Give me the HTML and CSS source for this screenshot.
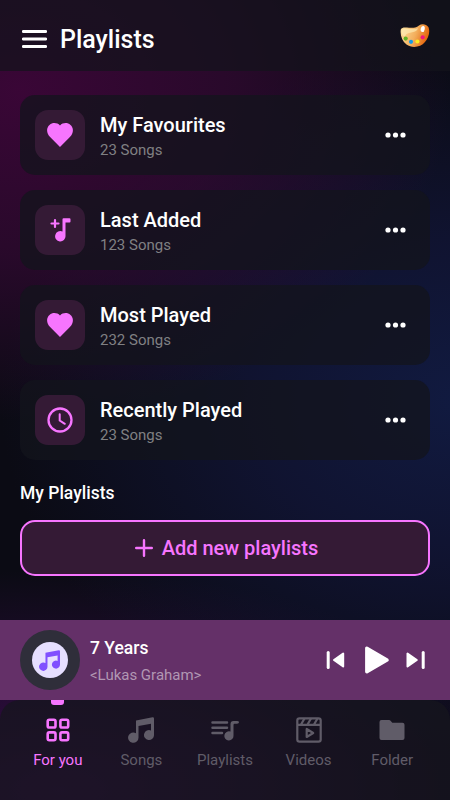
FILE: index.html
```
<!doctype html>
<html lang="en">
<head>
	<meta charset="utf-8">
	<title>Playlists</title>
	<link rel="stylesheet" href="styles.css">
</head>
<body>
<svg class="defs">
	<symbol id="heart" viewBox="0 0 26 24">
		<path d="M13 24 3.1 14.1C-.8 10.200-.8 4.600 2.500 1.900C5.600-.7 10.200-.4 13 2.500C15.800-.4 20.400-.7 23.500 1.900C26.800 4.600 26.800 10.200 22.900 14.100Z" fill="currentColor" />
	</symbol>
	<symbol id="note" viewBox="0 0 26 26">
		<path fill-rule="evenodd" d="M8 3.500 24.500.2Q26 0 26 1.500V18A5 5 0 1 1 23 13.500V6.800L10.500 9V20.500A5.200 5.200 0 1 1 8 16.200Z" fill="currentColor" />
	</symbol>
	<symbol id="dots" viewBox="0 0 21 6">
		<g fill="currentColor"><circle cx="3" cy="3" r="2.600" /><circle cx="10.500" cy="3" r="2.600" /><circle cx="18" cy="3" r="2.600" /></g>
	</symbol>
</svg>
<div class="app">
	<header class="header">
		<svg class="menu" viewBox="0 0 25 18"><path d="M1.300 1.500H23.700M1.300 9H23.700M1.300 16.500H23.700" /></svg>
		<h1>Playlists</h1>
		<svg class="palette" viewBox="0 0 30 24">
			<defs>
				<linearGradient id="wood" x1="0" y1="0" x2="1" y2=".3">
					<stop offset="0" stop-color="#fce3a2" />
					<stop offset=".6" stop-color="#f3ae5c" />
					<stop offset="1" stop-color="#e5680f" />
				</linearGradient>
			</defs>
			<path d="M.8 5.500C2 2.600 6 3.600 9 3.700C14.500 4 17 3.400 19 1.500C22-.8 26.500.2 28.500 3.200C30.400 8 28.300 14 25 18C20.500 23.500 12 24.500 6.500 20.500C2 17 0 11 .8 5.500Z" fill="url(#wood)" />
			<path d="M1.500 6.500C3 3.300 7 4.800 10.500 4.900C14.500 5 16.500 4.800 18 4C17 10 8 6.500 5 12C3 13 1.300 9.500 1.500 6.500Z" fill="#fff2bd" opacity=".6" />
			<ellipse cx="22.700" cy="5" rx="2" ry="3.100" transform="rotate(12 22.700 5)" fill="#fff" />
			<circle cx="5.700" cy="14.600" r="2.100" fill="#62b425" />
			<circle cx="11" cy="17.800" r="2.100" fill="#159be8" />
			<circle cx="17.400" cy="17.500" r="2.100" fill="#fced20" />
			<circle cx="22.700" cy="13.300" r="2.100" fill="#f0187c" />
		</svg>
	</header>

	<main class="content">
		<div class="card">
			<div class="tile"><svg class="icon-heart"><use href="#heart" /></svg></div>
			<div class="info">
				<h2>My Favourites</h2>
				<p>23 Songs</p>
			</div>
			<svg class="more"><use href="#dots" /></svg>
		</div>
		<div class="card">
			<div class="tile">
				<svg class="icon-added" viewBox="0 0 21 24">
					<path d="M5 2V9M1.500 5.500H8.500" fill="none" stroke="currentColor" stroke-width="2.200" stroke-linecap="round" />
					<path d="M12.500 1.200Q12.500.3 13.500.3H19.500Q20.500.3 20.500 1.300V3.500Q20.500 4.500 19.500 4.500H15.500V18A5.200 5.200 0 1 1 12.500 13.600Z" fill="currentColor" />
				</svg>
			</div>
			<div class="info">
				<h2>Last Added</h2>
				<p>123 Songs</p>
			</div>
			<svg class="more"><use href="#dots" /></svg>
		</div>
		<div class="card">
			<div class="tile"><svg class="icon-heart"><use href="#heart" /></svg></div>
			<div class="info">
				<h2>Most Played</h2>
				<p>232 Songs</p>
			</div>
			<svg class="more"><use href="#dots" /></svg>
		</div>
		<div class="card">
			<div class="tile">
				<svg class="icon-clock" viewBox="0 0 26 26">
					<g fill="none" stroke="currentColor" stroke-width="2.300" stroke-linecap="round">
						<circle cx="13" cy="13" r="11.500" />
						<path d="M12.700 7.300V13.500L17.800 16.800" stroke-width="2" />
					</g>
				</svg>
			</div>
			<div class="info">
				<h2>Recently Played</h2>
				<p>23 Songs</p>
			</div>
			<svg class="more"><use href="#dots" /></svg>
		</div>

		<h3>My Playlists</h3>
		<button class="add">
			<svg viewBox="0 0 18 18"><path d="M9 1.200V16.800M1.200 9H16.800" /></svg>
			<span>Add new playlists</span>
		</button>
	</main>

	<section class="player">
		<div class="cover"><div class="disc"><svg><use href="#note" /></svg></div></div>
		<div class="track">
			<h4>7 Years</h4>
			<p>&lt;Lukas Graham&gt;</p>
		</div>
		<div class="controls">
			<svg class="skip" viewBox="0 0 19 18">
				<path d="M2.200 1.500V16.500" stroke="#fff" stroke-width="3" stroke-linecap="round" />
				<path d="M17.200 2.500V15.500L8 9Z" fill="#fff" stroke="#fff" stroke-width="2" stroke-linejoin="round" />
			</svg>
			<svg class="play" viewBox="0 0 24 28">
				<path d="M1.800 2.200V25.800L22 14Z" fill="#fff" stroke="#fff" stroke-width="3.400" stroke-linejoin="round" />
			</svg>
			<svg class="skip" viewBox="0 0 19 18">
				<path d="M17.200 1.500V16.500" stroke="#fff" stroke-width="3" stroke-linecap="round" />
				<path d="M1.500 2.500V15.500L10.800 9Z" fill="#fff" stroke="#fff" stroke-width="2" stroke-linejoin="round" />
			</svg>
		</div>
	</section>

	<nav class="tabs">
		<a class="tab active">
			<svg viewBox="0 0 26 26">
				<g fill="none" stroke="currentColor" stroke-width="2.600">
					<rect x="2.700" y="2.700" width="7.800" height="7.800" rx="1.600" />
					<rect x="15.400" y="2.700" width="7.800" height="7.800" rx="1.600" />
					<rect x="2.700" y="15.400" width="7.800" height="7.800" rx="1.600" />
					<rect x="15.400" y="15.400" width="7.800" height="7.800" rx="1.600" />
				</g>
			</svg>
			<span>For you</span>
		</a>
		<a class="tab">
			<svg><use href="#note" /></svg>
			<span>Songs</span>
		</a>
		<a class="tab">
			<svg class="wide" viewBox="0 0 28 26">
				<path d="M1.500 5.500H16M1.500 10.700H16M1.500 16H11" fill="none" stroke="currentColor" stroke-width="2.500" stroke-linecap="round" />
				<path d="M19.500 7Q19.500 4 22.500 4H26Q28 4 28 5.300Q28 6.700 26 6.700H23.500Q22.500 6.700 22.500 8V18.500A4.600 4.600 0 1 1 19.500 14.600Z" fill="currentColor" />
			</svg>
			<span>Playlists</span>
		</a>
		<a class="tab">
			<svg viewBox="0 0 26 26">
				<g fill="none" stroke="currentColor" stroke-width="2.200" stroke-linejoin="round">
					<rect x="1.300" y="1.300" width="23.400" height="23.400" rx="2.200" />
					<path d="M1.500 7.900H24.500M8.500 1.500 5 7.500M15 1.500 11.500 7.500M21.500 1.500 18 7.500" />
					<path d="M10.700 12V20L17.200 16Z" />
				</g>
			</svg>
			<span>Videos</span>
		</a>
		<a class="tab">
			<svg viewBox="0 0 26 26">
				<path d="M.5 5Q.5 3 2.500 3H10Q11 3 11.800 4L13.300 5.700H23.500Q25.500 5.700 25.500 7.700V21Q25.500 23 23.500 23H2.500Q.5 23 .5 21Z" fill="currentColor" />
			</svg>
			<span>Folder</span>
		</a>
	</nav>
</div>
</body>
</html>
```

FILE: styles.css
```
* {
    margin: 0;
    padding: 0;
    box-sizing: border-box;
}

body, button {
    font: 15px/18px Roboto, "Noto Sans", sans-serif;
}

svg {
    display: block;
}

.defs {
    display: none;
}

.app {
    display: flex;
    flex-direction: column;
    width: 450px;
    height: 800px;
    overflow: hidden;
    color: #fff;
    background:
        radial-gradient(ellipse 430px 330px at 20px 90px, rgba(60, 6, 56, .95), rgba(58, 8, 56, .62) 50%, rgba(50, 10, 60, 0)),
        radial-gradient(ellipse 460px 350px at 460px 400px, rgba(18, 29, 72, .85), rgba(20, 26, 72, .55) 45%, rgba(22, 24, 70, 0)),
        radial-gradient(ellipse 460px 220px at 60px 790px, rgba(58, 12, 74, .95), rgba(50, 12, 68, .6) 50%, rgba(52, 10, 62, 0)),
        #0b0b14;
}

.header {
    display: flex;
    align-items: center;
    height: 71px;
    padding: 7px 20px 0 22px;
    background: rgba(19, 20, 28, .72);
}

.header h1 {
    flex: 1;
    margin-left: 13px;
    padding-top: 1px;
    font-size: 25px;
    font-weight: 500;
    line-height: 30px;
}

.menu {
    width: 25px;
    height: 18px;
    fill: none;
    stroke: #fff;
    stroke-width: 2.8;
    stroke-linecap: round;
}

.palette {
    width: 30px;
    height: 24px;
    margin-bottom: 7px;
}

.content {
    flex: 1;
    padding: 24px 20px 0;
}

.card {
    display: flex;
    align-items: center;
    height: 80px;
    margin-bottom: 15px;
    padding: 0 24px 0 15px;
    border-radius: 15px;
    background: rgba(19, 20, 28, .75);
}

.tile {
    display: flex;
    align-items: center;
    justify-content: center;
    width: 50px;
    height: 50px;
    border-radius: 13px;
    color: #f775ff;
    background: #341a35;
}

.icon-heart {
    width: 26px;
    height: 24px;
}

.icon-added {
    width: 21px;
    height: 24px;
}

.icon-clock {
    width: 26px;
    height: 26px;
}

.info {
    flex: 1;
    margin-left: 15px;
    padding-top: 2px;
}

.info h2 {
    font-size: 20px;
    font-weight: 500;
    line-height: 24px;
}

.info p {
    margin-top: 4px;
    color: #808083;
}

.more {
    width: 21px;
    height: 6px;
}

.content h3 {
    margin-top: 22px;
    font-size: 17.5px;
    font-weight: 500;
    line-height: 22px;
}

.add {
    display: flex;
    align-items: center;
    justify-content: center;
    gap: 9px;
    width: 100%;
    height: 56px;
    margin-top: 16px;
    padding-left: 3px;
    border: 2px solid #f775ff;
    border-radius: 15px;
    color: #f775ff;
    background: #341a35;
    font-size: 20px;
    font-weight: 500;
}

.add svg {
    width: 18px;
    height: 18px;
    fill: none;
    stroke: currentColor;
    stroke-width: 2.4;
    stroke-linecap: round;
}

.player {
    display: flex;
    align-items: center;
    height: 80px;
    padding: 0 25px 0 20px;
    background: #643068;
}

.cover {
    display: flex;
    align-items: center;
    justify-content: center;
    width: 60px;
    height: 60px;
    border-radius: 50%;
    background: #2f2e3a;
}

.disc {
    display: flex;
    align-items: center;
    justify-content: center;
    width: 36px;
    height: 36px;
    border-radius: 50%;
    color: #8050ff;
    background: #e6dfff;
}

.disc svg {
    width: 21px;
    height: 21px;
    margin-right: 2px;
}

.track {
    flex: 1;
    margin-left: 10px;
}

.track h4 {
    font-size: 17.5px;
    font-weight: 500;
    line-height: 22px;
}

.track p {
    margin-top: 7px;
    color: #b197b3;
}

.controls {
    display: flex;
    align-items: center;
    gap: 20px;
}

.skip {
    width: 19px;
    height: 18px;
}

.play {
    width: 24px;
    height: 28px;
}

.controls .skip:last-child {
    margin-left: -3px;
}

.tabs {
    display: flex;
    height: 100px;
    padding: 0 16px;
    border-radius: 20px 20px 0 0;
    background: rgba(22, 21, 29, .75);
}

.tab {
    position: relative;
    display: flex;
    flex: 1;
    flex-direction: column;
    align-items: center;
    padding-top: 17px;
    color: #605c68;
}

.tab svg {
    width: 26px;
    height: 26px;
}

.tab svg.wide {
    width: 28px;
}

.tab span {
    margin-top: 8px;
}

.tab.active {
    color: #f775ff;
}

/* marker hanging from the top edge of the current tab */
.tab.active::before {
    content: "";
    position: absolute;
    top: 0;
    width: 13px;
    height: 5px;
    border-radius: 0 0 3px 3px;
    background: #f775ff;
}
```
